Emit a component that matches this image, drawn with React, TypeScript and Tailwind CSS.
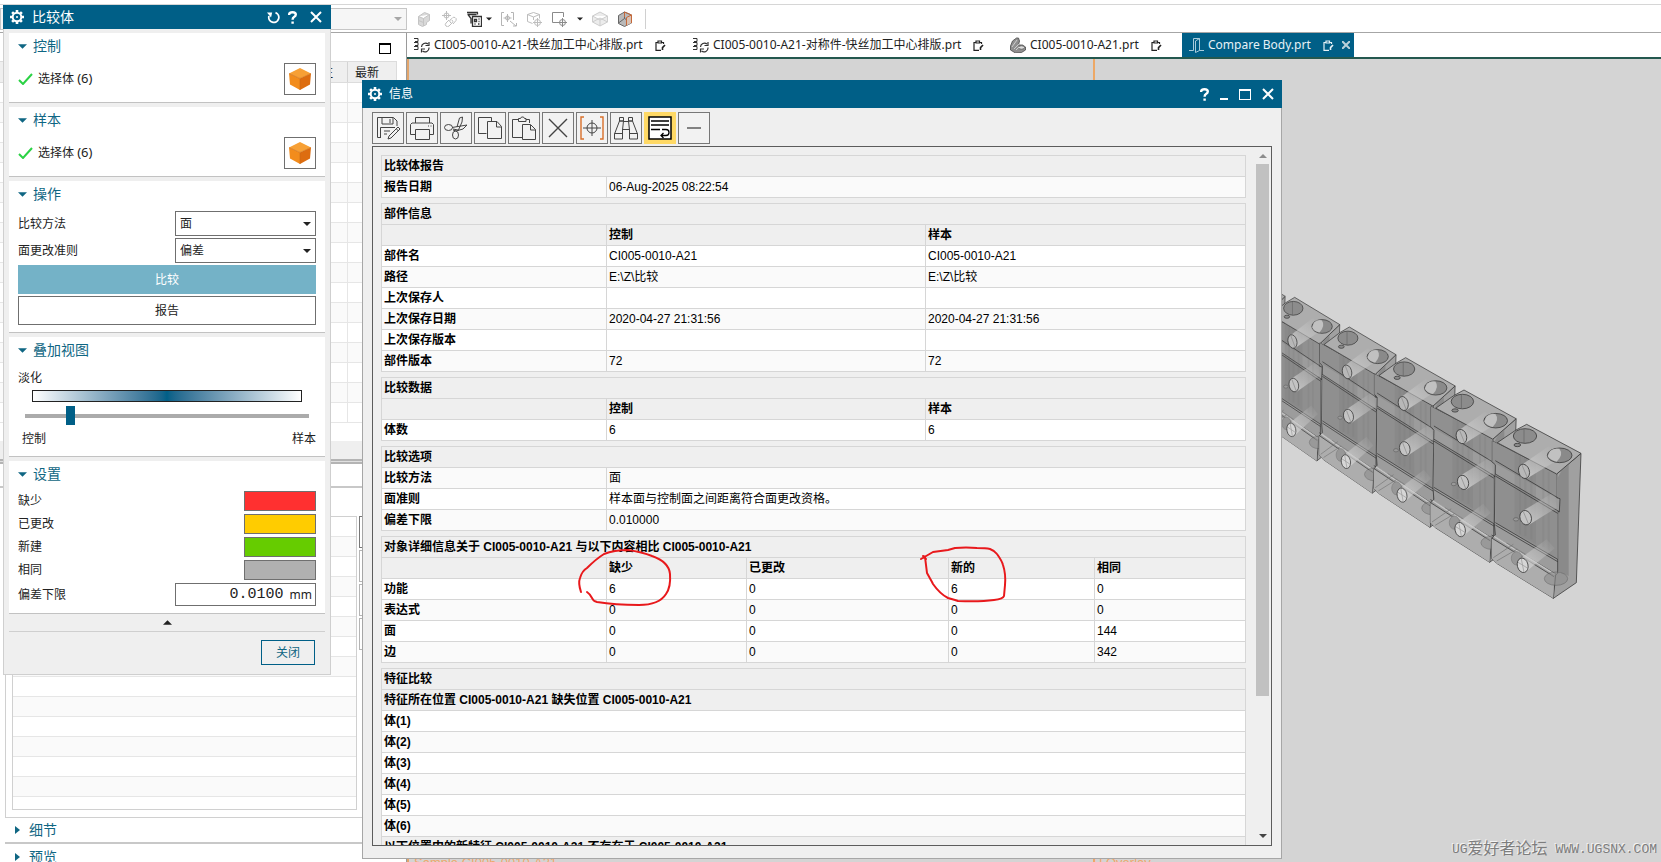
import type { ReactNode } from 'react'
import { clsx } from 'clsx'

const uiFont = "font-['Noto_Sans','Noto_Sans_CJK_SC',sans-serif]"
const reportFont = "font-['Liberation_Sans','Noto_Sans_CJK_SC',sans-serif]"
const monoFont = "font-['Liberation_Mono','Noto_Sans_CJK_SC',monospace]"

/* ---------- icons ---------- */

const Icon = ({
  size = 'size-6',
  box = '0 0 24 24',
  width = 1,
  children,
}: {
  size?: string
  box?: string
  width?: number
  children: ReactNode
}) => (
  <svg
    className={clsx('shrink-0', size)}
    viewBox={box}
    fill="none"
    stroke="currentColor"
    strokeWidth={width}
    aria-hidden="true"
  >
    {children}
  </svg>
)

const Gear = () => (
  <Icon size="size-[14px]" box="0 0 14 14" width={2}>
    <circle cx="7" cy="7" r="4.3" />
    <circle cx="7" cy="7" r="1" fill="currentColor" stroke="none" />
    <path
      strokeWidth="2.6"
      d="M7 0v2.4M7 11.6V14M0 7h2.4M11.6 7H14M2.1 2.1l1.6 1.6M10.3 10.3l1.6 1.6M2.1 11.9l1.6-1.6M10.3 3.7l1.6-1.6"
    />
  </Icon>
)

const Close = () => (
  <Icon size="size-3" box="0 0 12 12" width={2}>
    <path d="M1 1l10 10M11 1L1 11" />
  </Icon>
)

const Help = () => (
  <Icon size="h-[13px] w-[9px]" box="0 0 9 13" width={2.4}>
    <path d="M1.2 4V3Q1.6 1.2 4.4 1.2Q7.8 1.2 7.8 3.6Q7.8 5 6 6Q4.6 6.8 4.6 8.8M4.6 10.4v2.4" />
  </Icon>
)

const Reset = () => (
  <Icon size="size-[13px]" box="0 0 13 13" width={1.8}>
    <path d="M8.500 1.700A5 5 0 1 1 2 5" />
    <path d="M0 1.500h5.200L4 6.500z" fill="currentColor" stroke="none" />
  </Icon>
)

const Caret = ({ className = 'h-1 w-2' }: { className?: string }) => (
  <svg className={clsx('shrink-0', className)} viewBox="0 0 8 4" fill="currentColor" aria-hidden="true">
    <path d="M0 0h8L4 4z" />
  </svg>
)

const Cube = () => (
  <svg className="size-6" viewBox="0 0 24 24" aria-hidden="true">
    <path d="M1 6.500l11 5V23L2 17.500z" fill="#f28c1c" />
    <path d="M12 11.500l11-5-1 11L12 23z" fill="#dd6d10" />
    <path d="M12 1l11 5.500-11 5-11-5z" fill="#f7a035" />
    <path d="M1 6.500l11 5 11-5M12 11.500V23" stroke="#c96a14" strokeWidth=".6" fill="none" />
  </svg>
)

const AssemblyGlyph = () => (
  <Icon size="h-4 w-[17px]" box="0 0 17 16">
    <path stroke="#333" d="M1 1.500h4v3H2M1 5.500h4v3H2M1 9.500h4v3H1" />
    <path stroke="#333" strokeWidth="1.200" d="M8.500 10a4 4 0 0 1 6.500-3M16 5v3.500h-3.500M16 10.500a4 4 0 0 1-6.500 3.500M8.500 15.500V12H12" />
  </Icon>
)

const PartGlyph = () => (
  <svg className="size-4 shrink-0" viewBox="0 0 16 16" aria-hidden="true">
    <path d="M.5 9l2-5 4-3h2l1 3-1 4h4l3 2v3l-4 2.500-6 .500-5-3z" fill="#8f8f8f" stroke="#4a4a4a" strokeWidth=".8" />
    <ellipse cx="11.500" cy="10.500" rx="3" ry="1.700" fill="#ddd" stroke="#555" strokeWidth=".7" />
    <path d="M2 10l5-7M4 12l5-5M6 13l3-3" stroke="#ddd" strokeWidth=".8" />
  </svg>
)

const CompareGlyph = () => (
  <Icon size="h-4 w-[15px]" box="0 0 15 16">
    <path stroke="#a9ccdc" d="M0 13.500h4.500v-12h6v12H15M6.500 15.500l4-2M6.500 15.500V4l4-2.500" />
  </Icon>
)

const DocGlyph = () => (
  <Icon size="ml-2 size-[11px]" box="0 0 11 11" width={1.2}>
    <path d="M6 10.400H1V2.500h1.500M7 2.500h1.500V4M3 1h3.500v2H3z" />
    <path strokeWidth="1.600" d="M10 5L7.500 7.600V10" />
  </Icon>
)

/* ---------- command bar ---------- */

const commandIcons: { label: string; tone: string; arrow?: string; art: ReactNode }[] = [
  {
    label: '实体',
    tone: 'text-[#c4c4c4]',
    art: <path fill="#d9d9d9" d="M2.500 5.500l6-4 5 2v6l-3 2v2l-4 2-4-2zM2.500 5.500l5 2 6-4M7.500 7.500v7.500M2.500 9.500l5 2" />,
  },
  {
    label: '约束',
    tone: 'text-[#bdbdbd]',
    art: <path d="M5.500 0v9M1 4.500h9M3 4.500a2.500 2.500 0 1 0 5 0 2.500 2.500 0 1 0-5 0M8 9l-3 3a2 2 0 0 0 3 3l3-3a2 2 0 0 0 0-3M10 12l-1-1a2 2 0 0 1 0-2l2-1.500a2 2 0 0 1 4 2L12 13" />,
  },
  {
    label: '选择过滤器',
    tone: 'text-[#333]',
    arrow: 'mr-1',
    art: <path strokeWidth="1.300" d="M1 1.500h11M1.500 3.500h9M2 3.500l3 4v5M11.500 1.500v2M6.500 5.500h9v10h-9zM8.500 8.500h2v2h-2zM12.500 8h1M12.500 10.500h1M8.500 13h1M12 13h1.500" />,
  },
  {
    label: '捕捉',
    tone: 'text-[#b5b5b5]',
    art: <path d="M3 1.500H.5v13H3M10 1.500h2.500V9M6.500 3v8M2.500 7h8M4.500 7a2 2 0 1 0 4 0 2 2 0 1 0-4 0M9 10l6 5M12 15h3.500v-3" />,
  },
  {
    label: '体定位',
    tone: 'text-[#bdbdbd]',
    art: <path d="M1.500 3.500l6-2 6 2v4M1.500 3.500v7l5 2M1.500 3.500l6 2.500 6-2.500M7.500 6v3M11.500 7v9M7 11.500h9M8.500 11.500a3 3 0 1 0 6 0 3 3 0 1 0-6 0" />,
  },
  {
    label: '区域定位',
    tone: 'text-[#8a8a8a]',
    arrow: 'ml-[6px] mr-1',
    art: <path d="M7 11.500H1.500v-10h11V6M11.500 7v9M7 11.500h9M8.500 11.500a3 3 0 1 0 6 0 3 3 0 1 0-6 0" />,
  },
  {
    label: '线框显示',
    tone: 'text-[#cdcdcd]',
    art: <path fill="#ececec" d="M.5 5l7.500-4 7.500 4v6L8 15 .5 11zM.5 5L8 9l7.500-4M8 9v6M.5 11L8 7l7.500 4" />,
  },
]

const CommandBar = () => (
  <header className="shrink-0 bg-white">
    <div className="h-[5px] border-b border-[#d6d6d6]" />
    <div className="flex h-7 items-center border-b border-[#a6a6a6]">
      <button
        aria-label="选择范围"
        className="flex h-[22px] w-[407px] items-center justify-end border border-[#c6c6c6] bg-[#f6f6f6] pr-1 text-[#a6a6a6]"
      >
        <Caret />
      </button>
      <div className="flex items-center pl-1">
        {commandIcons.map(({ label, tone, arrow, art }) => (
          <button key={label} aria-label={label} className={clsx('flex h-6 items-center', tone)}>
            <span className="flex w-[25px] justify-center">
              <Icon size="size-4" box="0 0 16 16">
                {art}
              </Icon>
            </span>
            {arrow && <Caret className={clsx('h-1 w-[6px] text-[#222]', arrow)} />}
          </button>
        ))}
        <button aria-label="着色显示" className="flex w-[25px] justify-center">
          <svg className="size-4" viewBox="0 0 16 16" aria-hidden="true">
            <path d="M1.500 4.500l6-3.500 7 3v8l-7 3.500-6-3z" fill="#b9b9b9" stroke="#666" />
            <path d="M7.500 1v6.500M7.500 7.500l-6 4.500M7.500 7.500l7 4" stroke="#666" />
            <path d="M9.500 6.500l5-2.500v8l-5 2.500z" fill="#d9c2b4" />
            <path d="M7.500 1l7 3v8M9.500 6.500v8M9.500 6.500l5-2.500M7.500 1v5" stroke="#c4683a" fill="none" />
          </svg>
        </button>
        <span className="ml-2 h-5 w-px bg-[#d0d0d0]" />
      </div>
    </div>
  </header>
)

/* ---------- navigator behind the dialogs ---------- */

const stripes = (count: number) =>
  Array.from({ length: count }, (_, i) => (
    <div key={i} className="h-5 border-b border-[#e6e6e6] odd:bg-white even:bg-[#fafafa]" />
  ))

const Navigator = () => (
  <aside className="flex w-[407px] shrink-0 flex-col border-r border-[#9a9a9a] bg-white">
    <div className="flex h-7 shrink-0 items-start justify-end pr-[15px] pt-[10px]">
      <button aria-label="最大化" className="h-[11px] w-3 border border-t-2 border-black" />
    </div>
    <div className="mr-[9px] h-[380px] shrink-0 overflow-hidden border-r border-[#dcdcdc]">
      <div className="flex h-[22px] border-y border-[#dcdcdc] bg-[#efefef] text-xs leading-[22px] text-[#222]">
        <span className="w-[348px] border-r border-[#d4d4d4] pr-[14px] text-right">附注</span>
        <span className="pl-[7px]">最新</span>
      </div>
      <div className="flex">
        <div className="w-[348px] border-r border-[#e6e6e6]">{stripes(17)}</div>
        <div className="flex-1">{stripes(17)}</div>
      </div>
    </div>
    <div className="h-[18px] shrink-0 bg-[#efefef]" />
    <div className="h-[5px] shrink-0 border-y-2 border-[#b4b4b4] bg-[#e0e0e0]" />
    <div className="h-6 shrink-0 border-b-2 border-[#c8c8c8]" />
    <div className="ml-[5px] flex min-h-0 flex-1 border-b border-l border-[#d0d0d0] pb-[7px] pl-[6px] pt-7">
      <div className="w-[345px] overflow-hidden border border-[#d0d0d0]">{stripes(16)}</div>
      <div className="flex flex-col gap-[2px] pl-[2px]">
        {['上移', '下移', '添加', '移除'].map((name) => (
          <button key={name} aria-label={name} className="size-8 border border-[#b4b4b4] bg-white first:border-[#777]" />
        ))}
      </div>
    </div>
    <div className="ml-[5px] h-11 shrink-0 overflow-hidden text-sm leading-5 text-[#0f6683]">
      {['细节', '预览'].map((name) => (
        <button
          key={name}
          className="flex h-[26px] w-full items-center gap-[9px] border-[#c8c8c8] pl-[10px] first:border-b-2"
        >
          <svg className="h-2 w-[5px]" viewBox="0 0 5 8" fill="currentColor" aria-hidden="true">
            <path d="M0 0l5 4-5 4z" />
          </svg>
          {name}
        </button>
      ))}
    </div>
  </aside>
)

/* ---------- tabs and graphics window ---------- */

const tabs = [
  { name: 'CI005-0010-A21-快丝加工中心排版.prt', width: 'w-[279px]', icon: <AssemblyGlyph /> },
  { name: 'CI005-0010-A21-对称件-快丝加工中心排版.prt', width: 'w-[318px]', icon: <AssemblyGlyph /> },
  { name: 'CI005-0010-A21.prt', width: 'w-[178px]', icon: <PartGlyph /> },
]

const TabBar = () => (
  <nav className="flex h-[26px] shrink-0 border-b-2 border-[#24584f] bg-white text-xs">
    {tabs.map(({ name, width, icon }) => (
      <button key={name} className={clsx('flex items-center gap-1 whitespace-nowrap pl-[6px] text-[#222]', width)}>
        {icon}
        <span>{name}</span>
        <DocGlyph />
      </button>
    ))}
    <div className="flex w-[172px] items-center gap-1 bg-[#005f87] pl-[7px] text-[#e6f1f6]">
      <CompareGlyph />
      <button className="whitespace-nowrap">Compare Body.prt</button>
      <DocGlyph />
      <button aria-label="关闭标签" className="ml-1 text-[#b9d0da]">
        <Icon size="size-2" box="0 0 8 8" width={2}>
          <path d="M0 0l8 8M8 0L0 8" />
        </Icon>
      </button>
    </div>
  </nav>
)

// One machined block; the origin is the rear corner of its top face.
const Block = ({ x, y, sx, sy }: { x: number; y: number; sx: number; sy: number }) => (
  <g transform={`translate(${x} ${y}) scale(${sx} ${sy})`} stroke="#303030" strokeWidth="2.200" strokeLinejoin="round">
    <path d="M90 149L163 87 149 475 80 522z" fill="#a0a0a0" />
    <path d="M108 134L126 119V455L93 440V160z" fill="#8a8a8a" stroke="none" />
    <path
      d="M-103 50L90 149V220L100 223 98 262H93V447L87 452 80 522-90 417-105 402V342L-94 332-97 297-94 122-103 112z"
      fill="#9c9c9c"
    />
    <path d="M-103 50L90 149V220L-103 112z" fill="#909090" stroke="none" />
    <path d="M-94 150L93 262V405L-94 295z" fill="#8f8f8f" stroke="none" />
    <path d="M-105 342L82 455 80 522-90 417-105 402z" fill="#adadad" stroke="none" />
    <path d="M-36 75V325L28 360V108z" fill="#777" opacity=".22" stroke="none" />
    <path d="M-20 90V330M-4 96V335M14 106V345M50 135V368M66 142V378" stroke="#777" opacity=".2" strokeWidth="6" />
    <path d="M0 0L163 87 90 149-88 55-32 17z" fill="#adadad" />
    <path d="M-94 109L93 220M-94 149L98 262M-94 155L93 267M-94 295L93 405M-94 302L93 412M-105 332L87 449" fill="none" />
    <path d="M-98 336L84 450" stroke="#c4c4c4" strokeWidth="5" />
    <path d="M-105 341L82 457" fill="none" />
    <path d="M-100 400L-40 360M-90 410L-28 374M-60 356L0 392" stroke="#777" fill="none" />
    <path d="M-16 122L66 66 108 98 2 162z" fill="url(#bore)" stroke="none" />
    <path d="M-12 260L84 202 90 250 6 302z" fill="url(#bore)" stroke="none" />
    <path d="M-20 403L60 345 84 372-4 444z" fill="url(#bore)" stroke="none" />
    <ellipse cx="-5" cy="35" rx="35" ry="22" fill="#8c8c8c" />
    <path d="M-8 14v43" stroke="#666" />
    <ellipse cx="-28" cy="62" rx="10" ry="5" fill="#8a8a8a" />
    <ellipse cx="99" cy="93" rx="37" ry="22" fill="#8a8a8a" />
    <path d="M70 80Q80 70 98 73Q112 90 90 112Q70 108 63 96z" fill="#cacaca" opacity=".85" stroke="none" />
    <ellipse cx="-8" cy="141" rx="16" ry="22" fill="#b8b8b8" transform="rotate(-18 -8 141)" />
    <path d="M-14 122L2 160" stroke="#8a8a8a" />
    <ellipse cx="-3" cy="280" rx="17" ry="22" fill="#c4c4c4" transform="rotate(-18 -3 280)" />
    <path d="M-10 262L6 300" stroke="#8a8a8a" />
    <ellipse cx="-32" cy="285" rx="8" ry="5" fill="#9a9a9a" stroke="#666" />
    <ellipse cx="-30" cy="402" rx="16" ry="20" fill="#979797" stroke="#808080" />
    <ellipse cx="-12" cy="423" rx="16" ry="22" fill="#d6d6d6" transform="rotate(-14 -12 423)" />
    <path d="M-26 414L4 432M-16 404L-8 444" stroke="#999" />
    <ellipse cx="88" cy="463" rx="35" ry="20" fill="#8d8d8d" stroke="#555" opacity=".6" />
  </g>
)

const GraphicsView = () => (
  <main className="relative min-h-0 flex-1 overflow-hidden border-l-2 border-[#e2a56c] bg-[#d4d4d4]">
    <span className="absolute inset-y-0 left-[684px] w-[2px] bg-[#eda866]" />
    <svg className="absolute left-[851px] top-[211px] h-[350px] w-[340px]" viewBox="0 0 1020 1050" aria-label="零件模型">
      <defs>
        <linearGradient id="bore" x1="0" y1="1" x2="1" y2="0">
          <stop offset="0.15" stopColor="#d6d6d6" stopOpacity="0.75" />
          <stop offset="0.6" stopColor="#c4c4c4" stopOpacity="0.45" />
          <stop offset="1" stopColor="#b0b0b0" stopOpacity="0" />
        </linearGradient>
      </defs>
      <Block x={-55} y={-2} sx={0.8} sy={0.93} />
      <Block x={104} y={82} sx={0.83} sy={0.94} />
      <Block x={268} y={171} sx={0.86} sy={0.955} />
      <Block x={437} y={263} sx={0.91} sy={0.975} />
      <Block x={612} y={360} sx={0.96} sy={0.99} />
      <Block x={800} y={463} sx={1} sy={1} />
    </svg>
    <span className={clsx('absolute -bottom-[9px] left-[5px] text-[13px] leading-4 text-[#f0a76c]', reportFont)}>
      Sample CI005-0010-A21
    </span>
    <span className={clsx('absolute -bottom-[9px] left-[684px] text-[13px] leading-4 text-[#f0a76c]', reportFont)}>
      U Overlay
    </span>
    <span
      className={clsx(
        'absolute bottom-0 right-1 flex items-center gap-2 whitespace-nowrap text-[13px] leading-6 text-[#7d7d7d] [text-shadow:-1px_-1px_0_#f4f4f4]',
        monoFont,
      )}
    >
      <span className="flex items-center">
        UG<span className="text-base leading-6">爱好者论坛</span>
      </span>
      WWW.UGSNX.COM
    </span>
  </main>
)

/* ---------- compare dialog ---------- */

const Card = ({ title, children }: { title: string; children: ReactNode }) => (
  <section className="border-b border-[#c2c2c2] bg-white px-[9px] pb-[7px]">
    <h2 className="mb-1 flex h-[26px] items-center text-sm leading-5 text-[#0f6683]">
      <button className="flex items-center gap-[6px]">
        <Caret className="h-[5px] w-[9px]" />
        {title}
      </button>
    </h2>
    {children}
  </section>
)

const PickBody = () => (
  <div className="flex items-center text-xs text-[#222]">
    <Icon size="h-3 w-[15px]" box="0 0 15 12" width={2}>
      <path stroke="#2bd245" d="M1 7l4 4L14 1" />
    </Icon>
    <span className="ml-[5px] flex-1">
      选择体 <span className="text-[13px]">(6)</span>
    </span>
    <button aria-label="选择体" className="flex size-8 items-center justify-center border border-[#6f6f6f]">
      <Cube />
    </button>
  </div>
)

const Dropdown = ({ id, label, value }: { id: string; label: string; value: string }) => (
  <div className="mb-[2px] flex items-center justify-between">
    <label htmlFor={id}>{label}</label>
    <div className="relative">
      <select
        id={id}
        defaultValue={value}
        className="block h-[25px] w-[141px] appearance-none border border-[#6f6f6f] bg-white pl-1 leading-5"
      >
        <option>{value}</option>
      </select>
      <Caret className="pointer-events-none absolute right-[5px] top-[11px] h-1 w-2" />
    </div>
  </div>
)

const swatches = [
  { id: 'missing', label: '缺少', color: 'bg-[#ff3030]' },
  { id: 'changed', label: '已更改', color: 'bg-[#ffcc00]' },
  { id: 'created', label: '新建', color: 'bg-[#66cc00]' },
  { id: 'same', label: '相同', color: 'bg-[#b0b0b0]' },
]

const CompareDialog = () => (
  <div role="dialog" aria-label="比较体" className="absolute left-[3px] top-[5px] w-[328px] text-xs text-[#222]">
    <div className="flex h-6 items-center bg-[#005f87] pl-[7px] pr-[9px] text-white">
      <Gear />
      <h1 className="ml-2 flex-1 text-sm leading-5">比较体</h1>
      <div className="flex items-center gap-2">
        <button aria-label="重置">
          <Reset />
        </button>
        <button aria-label="帮助" className="mr-[5px]">
          <Help />
        </button>
        <button aria-label="关闭">
          <Close />
        </button>
      </div>
    </div>
    <div className="border border-t-0 border-[#cfcfcf] bg-[#efefef] px-[5px] pt-1">
      <div className="flex flex-col gap-1">
        <Card title="控制">
          <PickBody />
        </Card>
        <Card title="样本">
          <PickBody />
        </Card>
        <Card title="操作">
          <Dropdown id="method" label="比较方法" value="面" />
          <Dropdown id="criterion" label="面更改准则" value="偏差" />
          <button className="mb-[2px] block h-[29px] w-full bg-[#74b2c7] text-white">比较</button>
          <button className="block h-[29px] w-full border border-[#6f6f6f]">报告</button>
        </Card>
        <Card title="叠加视图">
          <label htmlFor="fade" className="block h-[23px] leading-[22px]">
            淡化
          </label>
          <div className="mx-[14px] h-3 border border-[#222] bg-linear-to-r from-white via-[#005f87] to-white" />
          <input
            id="fade"
            type="range"
            defaultValue={15}
            className="mx-[7px] mt-1 block h-[19px] w-[284px] appearance-none bg-transparent [&::-webkit-slider-runnable-track]:h-1 [&::-webkit-slider-runnable-track]:bg-[#ababab] [&::-webkit-slider-thumb]:-mt-2 [&::-webkit-slider-thumb]:h-[19px] [&::-webkit-slider-thumb]:w-[9px] [&::-webkit-slider-thumb]:appearance-none [&::-webkit-slider-thumb]:bg-[#005f87]"
          />
          <div className="flex h-6 items-end justify-between pl-1 leading-5">
            <span>控制</span>
            <span>样本</span>
          </div>
        </Card>
        <Card title="设置">
          {swatches.map(({ id, label, color }) => (
            <div key={id} className="mb-[3px] flex h-5 items-center justify-between">
              <label htmlFor={id}>{label}</label>
              <button id={id} className={clsx('h-5 w-[72px] border border-[#6f6f6f]', color)} />
            </div>
          ))}
          <div className="flex items-center justify-between">
            <label htmlFor="tolerance">偏差下限</label>
            <div className="flex h-[23px] w-[141px] items-center gap-[6px] border border-[#6f6f6f] bg-white pr-[3px]">
              <input
                id="tolerance"
                defaultValue="0.0100"
                className={clsx('h-5 min-w-0 flex-1 text-right text-[15px]', monoFont)}
              />
              <span>mm</span>
            </div>
          </div>
        </Card>
      </div>
      <button
        aria-label="收起"
        className="flex h-[18px] w-full items-center justify-center border-b border-[#cfcfcf] text-[#222]"
      >
        <Caret className="h-[5px] w-[9px] rotate-180" />
      </button>
      <div className="flex justify-end px-[10px] pb-[9px] pt-2">
        <button className="h-[25px] w-[54px] border border-[#005f87] text-[#0f6683]">关闭</button>
      </div>
    </div>
  </div>
)

/* ---------- information window ---------- */

const tools: { label: string; art: ReactNode }[] = [
  {
    label: '另存为',
    art: (
      <path d="M21 10V5l-3.500-3.500H1.500v20H4M6 2v6h11V2M14 3v4M4.500 22V11.500H19M8 15h6M8 18h3M22 11l2 2-9 9-3 1 1-3zM20.500 13l2 2" />
    ),
  },
  { label: '打印', art: <path d="M5.500 7V1.500h14V7M5 18.500H.5V8.500L2 7h20l1.500 1.500v10H20M5.500 13.500h14v10h-14zM18 10h1M20.500 10h1" /> },
  {
    label: '剪切',
    art: (
      <>
        <path d="M8 11.500l6-1L23 9l-4 4-7 2-3-1M13 11L15.500 2l3-1-.5 5-4 9M9 13l5 1" />
        <ellipse cx="4.500" cy="11.500" rx="4" ry="3" />
        <ellipse cx="11.500" cy="19" rx="3" ry="4" />
      </>
    ),
  },
  { label: '复制', art: <path d="M8.500 17.500h-8v-16h13V5M9.500 5.500H19l4.500 5v12h-14zM18.500 6v5h5" /> },
  { label: '粘贴', art: <path d="M10.500 21.500h-10v-18H6M14 3.500h3.500V7M6.500 5.500v-3h2l1-1.500h2l1 1.500h1.500v3zM10.500 8.500h8l5 5v10h-13zM18.500 9v5h5" /> },
  { label: '删除', art: <path strokeWidth="1.400" d="M3 3l18 18M21 3L3 21" /> },
  {
    label: '定位',
    art: (
      <>
        <path stroke="#d9702b" strokeWidth="1.400" d="M4 1H1v22h3M20 1h3v22h-3" />
        <circle cx="12" cy="12" r="5" />
        <path d="M12 4v16M3 12h18" />
      </>
    ),
  },
  {
    label: '查找',
    art: <path d="M5.500 5V1.500h4V5M14.500 5V1.500h4V5M5.500 5L.5 18v5h8v-9l1-9zM18.500 5l5 13v5h-8v-9l-1-9zM.5 17.500h8M15.500 17.500h8M9.500 5.500h5M8.500 13.500h7M5.500 5h4M14.500 5h4" />,
  },
  {
    label: '自动换行',
    art: (
      <>
        <path stroke="#000" strokeWidth="1.500" d="M1 1h22v22H1z" fill="#fff" />
        <path stroke="#000" strokeWidth="1.300" d="M3 5h18M3 9h18M3 13.500h9M14 13.500h4q3 0 3 3T18 19.500h-5M15.500 17L13 19.500l2.500 2.500" />
      </>
    ),
  },
  { label: '分隔', art: <path strokeWidth="1.300" d="M5 12h14" /> },
]

type Table = { title: string; cols: string[]; head?: string[]; rows: string[][]; headings?: string[] }

const part = 'CI005-0010-A21'
const pair = ['w-[225px]', 'w-[319px]', '']

const tables: Table[] = [
  { title: '比较体报告', cols: ['w-[225px]', ''], rows: [['报告日期', '06-Aug-2025 08:22:54']] },
  {
    title: '部件信息',
    cols: pair,
    head: ['', '控制', '样本'],
    rows: [
      ['部件名', part, part],
      ['路径', 'E:\\Z\\比较', 'E:\\Z\\比较'],
      ['上次保存人', '', ''],
      ['上次保存日期', '2020-04-27 21:31:56', '2020-04-27 21:31:56'],
      ['上次保存版本', '', ''],
      ['部件版本', '72', '72'],
    ],
  },
  { title: '比较数据', cols: pair, head: ['', '控制', '样本'], rows: [['体数', '6', '6']] },
  {
    title: '比较选项',
    cols: ['w-[225px]', ''],
    rows: [
      ['比较方法', '面'],
      ['面准则', '样本面与控制面之间距离符合面更改资格。'],
      ['偏差下限', '0.010000'],
    ],
  },
  {
    title: `对象详细信息关于 ${part} 与以下内容相比 ${part}`,
    cols: ['w-[225px]', 'w-[140px]', 'w-[202px]', 'w-[146px]', ''],
    head: ['', '缺少', '已更改', '新的', '相同'],
    rows: [
      ['功能', '6', '0', '6', '0'],
      ['表达式', '0', '0', '0', '0'],
      ['面', '0', '0', '0', '144'],
      ['边', '0', '0', '0', '342'],
    ],
  },
  {
    title: '特征比较',
    cols: [''],
    head: [`特征所在位置 ${part} 缺失位置 ${part}`],
    rows: [['体(1)'], ['体(2)'], ['体(3)'], ['体(4)'], ['体(5)'], ['体(6)']],
    headings: [`以下位置中的新特征 ${part} 不存在于 ${part}`],
  },
]

const cell = 'h-[21px] whitespace-nowrap border border-[#d6d6d6] px-[2px] py-0 text-left leading-5'

const ReportTable = ({ title, cols, head, rows, headings = [] }: Table) => (
  <table className="mb-[5px] w-full table-fixed border-collapse border border-[#d6d6d6]">
    <colgroup>
      {cols.map((width, i) => (
        <col key={i} className={width} />
      ))}
    </colgroup>
    <thead className="bg-[#efefef]">
      <tr>
        <th colSpan={cols.length} className={cell}>
          {title}
        </th>
      </tr>
      {head && (
        <tr>
          {head.map((text, i) => (
            <th key={i} className={cell}>
              {text}
            </th>
          ))}
        </tr>
      )}
    </thead>
    <tbody>
      {rows.map(([name, ...values], i) => (
        <tr key={name} className={(i + (head ? 0 : 1)) % 2 ? 'bg-[#fafafa]' : 'bg-white'}>
          <th className={cell}>{name}</th>
          {values.map((value, j) => (
            <td key={j} className={cell}>
              {value}
            </td>
          ))}
        </tr>
      ))}
      {headings.map((text) => (
        <tr key={text} className="bg-[#efefef]">
          <th className={cell}>{text}</th>
        </tr>
      ))}
    </tbody>
  </table>
)

const InfoWindow = () => (
  <div
    role="dialog"
    aria-label="信息"
    className="absolute bottom-[3px] left-[362px] top-20 flex w-[920px] flex-col"
  >
    <div className="flex h-7 shrink-0 items-center bg-[#005f87] pl-[6px] pr-2 text-white">
      <Gear />
      <h1 className="ml-[7px] flex-1 text-xs">信息</h1>
      <div className="flex items-center gap-[11px]">
        <button aria-label="帮助">
          <Help />
        </button>
        <button aria-label="最小化" className="flex h-3 items-end">
          <span className="h-[2px] w-2 bg-white" />
        </button>
        <button aria-label="最大化" className="h-[11px] w-3 border border-t-2 border-white" />
        <button aria-label="关闭">
          <Close />
        </button>
      </div>
    </div>
    <div className="flex min-h-0 flex-1 flex-col border border-t-0 border-[#a6a6a6] bg-[#efefef] px-[9px] pb-3 pt-1">
      <div className="mb-[2px] flex gap-[2px]">
        {tools.map(({ label, art }) => (
          <button
            key={label}
            aria-label={label}
            className={clsx(
              'flex size-8 items-center justify-center border text-[#444]',
              label === '自动换行' ? 'border-[#ffd965] bg-[#ffd965]' : 'border-[#777] bg-[#f2f2f2]',
            )}
          >
            <Icon>{art}</Icon>
          </button>
        ))}
      </div>
      <div className={clsx('flex min-h-0 flex-1 overflow-hidden border border-[#5c5c5c] text-xs text-black', reportFont)}>
        <div className="min-w-0 flex-1 pl-2 pt-2">
          {tables.map((table) => (
            <ReportTable key={table.title} {...table} />
          ))}
        </div>
        <div className="ml-[10px] mr-[2px] flex w-[13px] shrink-0 flex-col items-center">
          <button aria-label="向上滚动" className="flex h-[17px] items-center text-[#8c8c8c]">
            <Caret className="h-1 w-2 rotate-180" />
          </button>
          <div className="h-[532px] w-full bg-[#c1c1c1]" />
          <button aria-label="向下滚动" className="mt-auto flex h-[18px] items-center text-[#444]">
            <Caret />
          </button>
        </div>
      </div>
    </div>
  </div>
)

// Hand-drawn marks over the report
const Markup = () => (
  <svg
    className="pointer-events-none absolute left-[570px] top-[541px] h-[70px] w-[450px]"
    viewBox="0 0 450 70"
    fill="none"
    stroke="#e8191c"
    strokeWidth="2"
    strokeLinecap="round"
    strokeLinejoin="round"
    aria-hidden="true"
  >
    <path d="M11 51Q8 42 10 37Q12 30 17 27Q26 18 34 13Q44 9 58 9Q72 11 82 15Q99 21 100 33Q101 46 96 53Q89 64 69 64Q45 64 27 61Q23 60 22 57Q20 53 17 51" />
    <path d="M351 18L363 11L378 9L385 7Q396 6 407 7Q416 7 420 8Q425 10 427 13Q432 20 433 24Q436 33 435 44L434 55Q433 58 424 59Q410 61 388 60L385 59L378 57Q370 53 363 43L362 41L357 32L355 16L353 15L356 18" />
  </svg>
)

const App = () => (
  <div className={clsx('relative flex h-screen w-full flex-col overflow-hidden bg-white', uiFont)}>
    <CommandBar />
    <div className="flex min-h-0 flex-1">
      <Navigator />
      <div className="flex min-w-0 flex-1 flex-col">
        <TabBar />
        <GraphicsView />
      </div>
    </div>
    <CompareDialog />
    <InfoWindow />
    <Markup />
  </div>
)

export default App
